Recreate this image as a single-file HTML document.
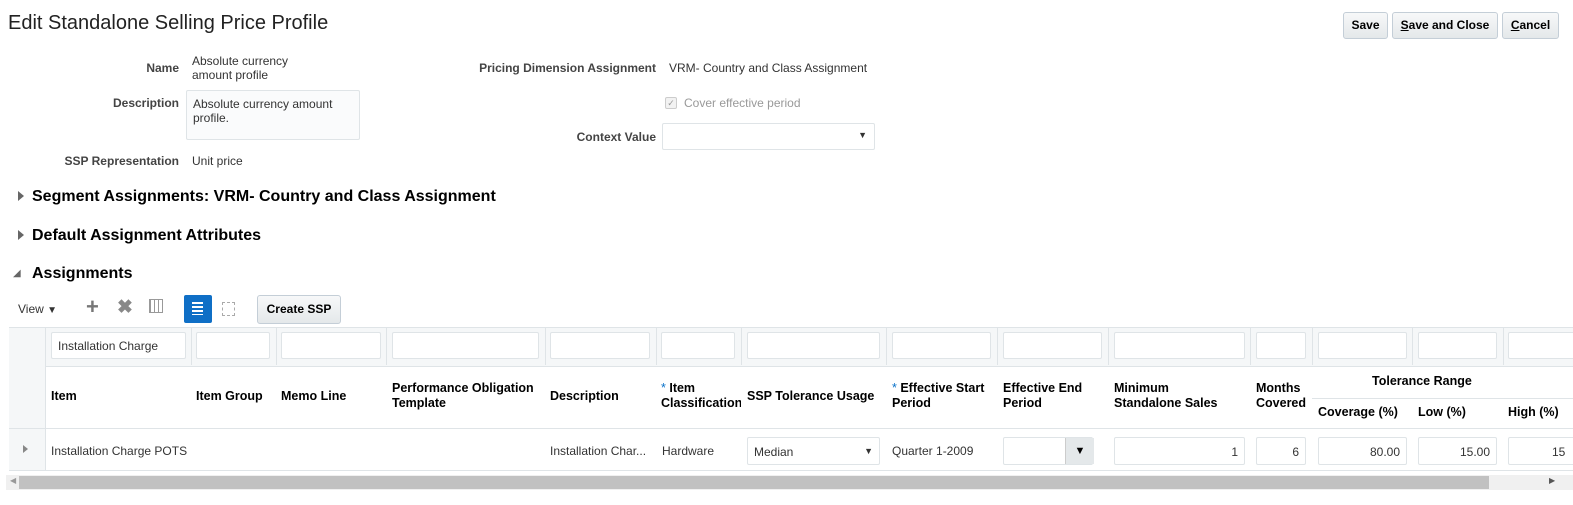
<!DOCTYPE html>
<html><head><style>
body{margin:0;width:1573px;height:505px;overflow:hidden;background:#fff;font-family:"Liberation Sans",Arial,sans-serif;font-size:12px;color:#333;position:relative}
.a{position:absolute;white-space:nowrap}
.b{font-weight:bold}
.lbl{font-weight:bold;text-align:right;color:#444}
.btn{position:absolute;top:12px;height:25px;border:1px solid #c4ced7;border-radius:3px;background:linear-gradient(#f7f8f9,#e4e8ea);font-weight:bold;font-size:12px;color:#000;line-height:25px;text-align:center}
.inp{position:absolute;height:25px;border:1px solid #dfe4e7;border-radius:2px;background:#fff;box-sizing:border-box}
.hdr{font-weight:bold;font-size:13px;color:#000}
.vl{position:absolute;width:1px;background:#dfe4e7}
.tri{position:absolute;width:0;height:0;border-top:5px solid transparent;border-bottom:5px solid transparent;border-left:6px solid #666}
</style></head><body>
<div class="a" style="left:8px;top:12px;font-size:20px;color:#222">Edit Standalone Selling Price Profile</div>
<div class="btn" style="left:1343px;width:43px">Save</div>
<div class="btn" style="left:1392px;width:104px"><u>S</u>ave and Close</div>
<div class="btn" style="left:1502px;width:55px"><u>C</u>ancel</div>

<div class="a lbl" style="right:1394px;top:61px">Name</div>
<div class="a" style="left:192px;top:54px;line-height:14px">Absolute currency<br>amount profile</div>
<div class="a lbl" style="right:1394px;top:96px">Description</div>
<div class="inp" style="left:186px;top:90px;width:174px;height:50px;background:#fafbfc;padding:6px;line-height:14px;white-space:normal">Absolute currency amount profile.</div>
<div class="a lbl" style="right:1394px;top:154px">SSP Representation</div>
<div class="a" style="left:192px;top:154px">Unit price</div>
<div class="a lbl" style="right:917px;top:61px">Pricing Dimension Assignment</div>
<div class="a" style="left:669px;top:61px">VRM- Country and Class Assignment</div>
<div class="a" style="left:665px;top:97px;width:10px;height:10px;border:1px solid #ccc;border-radius:2px;background:#f2f2f2;font-size:9px;line-height:10px;text-align:center;color:#999">✓</div>
<div class="a" style="left:684px;top:96px;color:#999">Cover effective period</div>
<div class="a lbl" style="right:917px;top:130px">Context Value</div>
<div class="inp" style="left:662px;top:123px;width:213px;height:27px"><span class="a" style="right:7px;top:6px;font-size:9px;color:#333">▼</span></div>

<div class="tri" style="left:18px;top:191px"></div>
<div class="a hdr" style="left:32px;top:188px;font-size:16px">Segment Assignments: VRM- Country and Class Assignment</div>
<div class="tri" style="left:18px;top:230px"></div>
<div class="a hdr" style="left:32px;top:227px;font-size:16px">Default Assignment Attributes</div>
<div class="a" style="left:13px;top:268px;font-size:10px;color:#666">◢</div>
<div class="a hdr" style="left:32px;top:265px;font-size:16px">Assignments</div>

<div class="a" style="left:18px;top:302px">View <span style="font-size:10px">▼</span></div>
<div class="a" style="left:86px;top:296px;font-size:22px;font-weight:bold;color:#777;line-height:22px">+</div>
<div class="a" style="left:117px;top:297px;font-size:19px;font-weight:bold;color:#888;line-height:22px">✖</div>
<div class="a" style="left:149px;top:299px;width:12px;height:12px;border:1px solid #999;background:repeating-linear-gradient(90deg,#999 0 1px,transparent 1px 4px)"></div>
<div class="a" style="left:184px;top:295px;width:28px;height:28px;background:#0f6fc6;border-radius:2px"><div style="position:absolute;left:8px;top:7px;width:11px;height:13px;background:repeating-linear-gradient(#fff 0 2px,transparent 2px 4px)"></div></div>
<div class="a" style="left:222px;top:302px;width:11px;height:12px;border:1px dashed #aaa"></div>
<div class="btn" style="left:257px;top:295px;width:82px;height:27px;line-height:27px">Create SSP</div>

<!-- table -->
<div class="a" style="left:9px;top:327px;width:1564px;height:38px;background:#f5f7f8;border-top:1px solid #dfe4e7;border-bottom:1px solid #dfe4e7"></div>
<div class="a" style="left:9px;top:366px;width:36px;height:104px;background:#f5f7f8"></div>
<div class="a" style="left:9px;top:428px;width:1564px;height:1px;background:#dfe4e7"></div>
<div class="a" style="left:9px;top:470px;width:1564px;height:1px;background:#dfe4e7"></div>
<div class="vl" style="left:45px;top:327px;height:143px"></div>
<div class="vl" style="left:191px;top:327px;height:38px"></div>
<div class="vl" style="left:276px;top:327px;height:38px"></div>
<div class="vl" style="left:386px;top:327px;height:38px"></div>
<div class="vl" style="left:545px;top:327px;height:38px"></div>
<div class="vl" style="left:656px;top:327px;height:38px"></div>
<div class="vl" style="left:741px;top:327px;height:38px"></div>
<div class="vl" style="left:886px;top:327px;height:38px"></div>
<div class="vl" style="left:997px;top:327px;height:38px"></div>
<div class="vl" style="left:1108px;top:327px;height:38px"></div>
<div class="vl" style="left:1250px;top:327px;height:38px"></div>
<div class="vl" style="left:1312px;top:327px;height:38px"></div>
<div class="vl" style="left:1412px;top:327px;height:38px"></div>
<div class="vl" style="left:1503px;top:327px;height:38px"></div>
<div class="a" style="left:1312px;top:398px;width:261px;height:1px;background:#dfe4e7"></div>

<div class="inp" style="left:51px;top:332px;width:135px;height:27px;padding:6px"><span>Installation Charge</span></div>
<div class="inp" style="left:196px;top:332px;width:74px;height:27px"></div>
<div class="inp" style="left:281px;top:332px;width:100px;height:27px"></div>
<div class="inp" style="left:392px;top:332px;width:147px;height:27px"></div>
<div class="inp" style="left:550px;top:332px;width:100px;height:27px"></div>
<div class="inp" style="left:661px;top:332px;width:74px;height:27px"></div>
<div class="inp" style="left:747px;top:332px;width:133px;height:27px"></div>
<div class="inp" style="left:892px;top:332px;width:99px;height:27px"></div>
<div class="inp" style="left:1003px;top:332px;width:99px;height:27px"></div>
<div class="inp" style="left:1114px;top:332px;width:131px;height:27px"></div>
<div class="inp" style="left:1256px;top:332px;width:50px;height:27px"></div>
<div class="inp" style="left:1318px;top:332px;width:89px;height:27px"></div>
<div class="inp" style="left:1418px;top:332px;width:79px;height:27px"></div>
<div class="inp" style="left:1508px;top:332px;width:70px;height:27px"></div>

<div class="a hdr" style="left:51px;top:389px;font-size:12.5px">Item</div>
<div class="a hdr" style="left:196px;top:389px;font-size:12.5px">Item Group</div>
<div class="a hdr" style="left:281px;top:389px;font-size:12.5px">Memo Line</div>
<div class="a hdr" style="left:392px;top:381px;font-size:12.5px;line-height:15px">Performance Obligation<br>Template</div>
<div class="a hdr" style="left:550px;top:389px;font-size:12.5px">Description</div>
<div class="a hdr" style="left:661px;top:381px;font-size:12.5px;line-height:15px;width:80px;overflow:hidden"><span style="color:#0a72c9;font-weight:normal">*</span> Item<br>Classification</div>
<div class="a hdr" style="left:747px;top:389px;font-size:12.5px">SSP Tolerance Usage</div>
<div class="a hdr" style="left:892px;top:381px;font-size:12.5px;line-height:15px"><span style="color:#0a72c9;font-weight:normal">*</span> Effective Start<br>Period</div>
<div class="a hdr" style="left:1003px;top:381px;font-size:12.5px;line-height:15px">Effective End<br>Period</div>
<div class="a hdr" style="left:1114px;top:381px;font-size:12.5px;line-height:15px">Minimum<br>Standalone Sales</div>
<div class="a hdr" style="left:1256px;top:381px;font-size:12.5px;line-height:15px">Months<br>Covered</div>
<div class="a hdr" style="left:1372px;top:374px;font-size:12.5px">Tolerance Range</div>
<div class="a hdr" style="left:1318px;top:405px;font-size:12.5px">Coverage (%)</div>
<div class="a hdr" style="left:1418px;top:405px;font-size:12.5px">Low (%)</div>
<div class="a hdr" style="left:1508px;top:405px;font-size:12.5px">High (%)</div>

<div class="a" style="left:23px;top:445px;width:0;height:0;border-top:4px solid transparent;border-bottom:4px solid transparent;border-left:5px solid #888"></div>
<div class="a" style="left:51px;top:444px">Installation Charge POTS</div>
<div class="a" style="left:550px;top:444px">Installation Char...</div>
<div class="a" style="left:662px;top:444px">Hardware</div>
<div class="inp" style="left:747px;top:437px;width:133px;height:28px;padding:7px 6px">Median<span class="a" style="right:6px;top:8px;font-size:9px">▼</span></div>
<div class="a" style="left:892px;top:444px">Quarter 1-2009</div>
<div class="inp" style="left:1003px;top:437px;width:90px;height:28px"><div class="a" style="left:61px;top:0;width:28px;height:26px;background:#e4e8ea;border-left:1px solid #ccc;text-align:center;line-height:26px;font-size:11px;color:#000">▼</div></div>
<div class="inp" style="left:1114px;top:437px;width:131px;height:28px;text-align:right;padding:7px 6px">1</div>
<div class="inp" style="left:1256px;top:437px;width:50px;height:28px;text-align:right;padding:7px 6px">6</div>
<div class="inp" style="left:1318px;top:437px;width:89px;height:28px;text-align:right;padding:7px 6px">80.00</div>
<div class="inp" style="left:1418px;top:437px;width:79px;height:28px;text-align:right;padding:7px 6px">15.00</div>
<div class="inp" style="left:1508px;top:437px;width:70px;height:28px;padding:7px 0 0 43px">15</div>

<div class="a" style="left:6px;top:475px;width:1567px;height:15px;background:#f0f0f0"></div>
<div class="a" style="left:19px;top:476px;width:1470px;height:13px;background:#c1c1c1"></div>
<div class="a" style="left:10px;top:476px;font-size:8px;color:#999">◀</div>
<div class="a" style="left:1549px;top:476px;font-size:8px;color:#555">▶</div>
</body></html>
